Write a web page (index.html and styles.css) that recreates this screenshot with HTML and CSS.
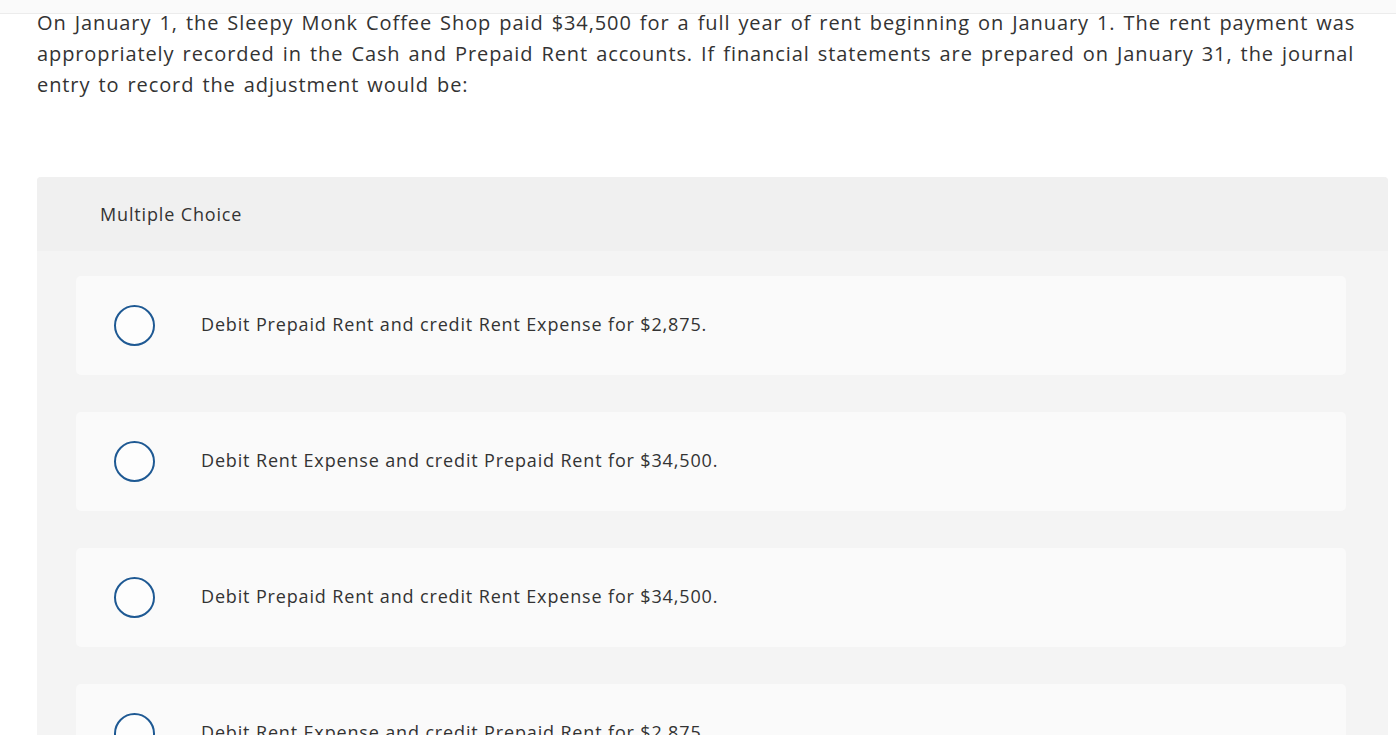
FILE: index.html
```html
<!DOCTYPE html>
<html>
<head>
<meta charset="utf-8">
<link rel="stylesheet" href="styles.css">
</head>
<body>
<div class="topbar"></div>
<main class="page">
  <p class="question">On January 1, the Sleepy Monk Coffee Shop paid $34,500 for a full year of rent beginning on January 1. The rent payment was appropriately recorded in the Cash and Prepaid Rent accounts. If financial statements are prepared on January 31, the journal entry to record the adjustment would be:</p>
  <section class="mc">
    <div class="mc-head">Multiple Choice</div>
    <div class="mc-body">
      <label class="opt"><span class="radio"></span><span class="opt-text">Debit Prepaid Rent and credit Rent Expense for $2,875.</span></label>
      <label class="opt"><span class="radio"></span><span class="opt-text">Debit Rent Expense and credit Prepaid Rent for $34,500.</span></label>
      <label class="opt"><span class="radio"></span><span class="opt-text">Debit Prepaid Rent and credit Rent Expense for $34,500.</span></label>
      <label class="opt"><span class="radio"></span><span class="opt-text">Debit Rent Expense and credit Prepaid Rent for $2,875.</span></label>
    </div>
  </section>
</main>
</body>
</html>
```

FILE: styles.css
```css
html, body {
  margin: 0;
  padding: 0;
  background: #fff;
}
body {
  font-family: "Open Sans", Lato, sans-serif;
  color: #333;
  height: 735px;
  overflow: hidden;
  position: relative;
}
.topbar {
  position: absolute;
  left: 0;
  top: 0;
  right: 0;
  height: 13px;
  background: #fafafa;
  border-bottom: 1px solid #ececec;
}
.page {
  padding: 0 8px 0 37px;
}
.question {
  margin: 0;
  padding-top: 7px;
  font-size: 20px;
  line-height: 31px;
  letter-spacing: 0.9px;
  word-spacing: 2px;
}
.mc {
  margin-top: 77px;
  background: #f4f4f4;
  border-radius: 4px 4px 0 0;
}
.mc-head {
  height: 74px;
  background: #f0f0f0;
  border-radius: 4px 4px 0 0;
  display: flex;
  align-items: center;
  padding-left: 63px;
  padding-bottom: 1px;
  box-sizing: border-box;
  font-size: 18px;
  letter-spacing: 0.85px;
}
.mc-body {
  padding: 25px 42px 40px 39px;
  display: flex;
  flex-direction: column;
  gap: 37px;
}
.opt {
  height: 99px;
  background: #fafafa;
  border-radius: 5px;
  display: flex;
  align-items: center;
  padding-left: 38px;
}
.radio {
  width: 37px;
  height: 37px;
  border: 2px solid #1e5993;
  border-radius: 50%;
  background: #fdfdfd;
  flex: none;
}
.opt-text {
  margin-left: 46px;
  padding-bottom: 3px;
  font-size: 18px;
  letter-spacing: 0.85px;
}
```
